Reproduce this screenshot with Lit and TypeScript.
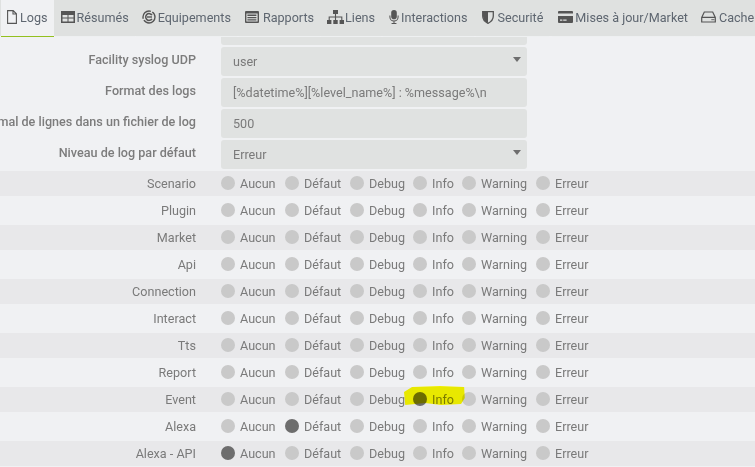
import { LitElement, html, css, svg } from "lit";
import { customElement } from "lit/decorators.js";

const icons: Record<string, any> = {
  file: svg`<svg class="ic" style="width:10px" viewBox="0 0 10 14"><path d="M.6.6h5.6l3.2 3.2v9.6H.6zM6 .8v3.2h3.2" fill="none" stroke="currentColor" stroke-width="1.1"/></svg>`,
  table: svg`<svg class="ic" style="width:14px" viewBox="0 0 14 12"><path fill-rule="evenodd" d="M0 0h14v12H0zM1.5 4v2.6h5V4zM7.5 4v2.6h5V4zM1.5 7.6v2.9h5V7.6zM7.5 7.6v2.9h5V7.6z" fill="currentColor"/></svg>`,
  equip: svg`<svg class="ic" style="width:14px" viewBox="0 0 14 14"><circle cx="7" cy="7" r="6" fill="none" stroke="currentColor" stroke-width="1.4" stroke-dasharray="15 1.5 13 1.5"/><path d="M10 5.2A3.4 3.4 0 1 0 10 8.8" fill="none" stroke="currentColor" stroke-width="1.5"/><path d="M5 7h5" stroke="currentColor" stroke-width="1.4"/></svg>`,
  report: svg`<svg class="ic" style="width:14px" viewBox="0 0 14 12"><path fill-rule="evenodd" d="M1 0h12a1 1 0 0 1 1 1v10a1 1 0 0 1-1 1H1a1 1 0 0 1-1-1V1a1 1 0 0 1 1-1zM1.4 2.6v8h11.2v-8zM2.4 3.6h9v1.4h-9zM2.4 5.9h9v1.4h-9zM2.4 8.2h9v1.4h-9z" fill="currentColor"/></svg>`,
  sitemap: svg`<svg class="ic" style="width:17px" viewBox="0 0 17 14"><path d="M6 0h5v4H6zM0 10h4.4v4H0zM6.3 10h4.4v4H6.3zM12.6 10H17v4h-4.4z" fill="currentColor"/><path d="M8.5 4v6M2.2 10V7h12.6v3" fill="none" stroke="currentColor" stroke-width="1.1"/></svg>`,
  mic: svg`<svg class="ic" style="width:10px" viewBox="0 0 10 15"><rect x="2" y="0" width="6" height="10" rx="3" fill="currentColor"/><path d="M.6 6v1.5a4.4 4.4 0 0 0 8.8 0V6M5 12v2M2.4 14.4h5.2" fill="none" stroke="currentColor" stroke-width="1.1"/></svg>`,
  shield: svg`<svg class="ic" style="width:12px" viewBox="0 0 12 14"><path d="M.7 1.6h10.6V6c0 3.6-2.6 6-5.3 7.3C3.3 12 .7 9.6.7 6z" fill="none" stroke="currentColor" stroke-width="1.3"/><path d="M1 2h5v11C3.5 12 1 9.6 1 6z" fill="currentColor"/></svg>`,
  card: svg`<svg class="ic" style="width:15px" viewBox="0 0 15 12"><path fill-rule="evenodd" d="M1 0h13a1 1 0 0 1 1 1v1.6H0V1a1 1 0 0 1 1-1zM0 5h15v6a1 1 0 0 1-1 1H1a1 1 0 0 1-1-1zM2 8.6v1.2h2.4V8.6zM5.2 8.6v1.2h3.4V8.6z" fill="currentColor"/></svg>`,
  hdd: svg`<svg class="ic" style="width:15px" viewBox="0 0 15 12"><path d="M.7 6.5 3.3 1h8.4l2.6 5.5V11H.7zM.9 6.4h13.2" fill="none" stroke="currentColor" stroke-width="1.2"/><path d="M10.5 8h1.2v1.2h-1.2zM12.3 8h1v1.2h-1z" fill="currentColor"/></svg>`,
};

const tabs: [string, string, number, number][] = [
  ["file", "Logs", 3, 0],
  ["table", "Résumés", 2, 0],
  ["equip", "Equipements", 2, 0],
  ["report", "Rapports", 4, 1],
  ["sitemap", "Liens", 1, 0],
  ["mic", "Interactions", 2, 1],
  ["shield", "Securité", 4, 1],
  ["card", "Mises à jour/Market", 2, 2],
  ["hdd", "Cache", 3, 0],
];

const levels = ["Aucun", "Défaut", "Debug", "Info", "Warning", "Erreur"];
const rows: [string, number][] = [
  ["Scenario", -1], ["Plugin", -1], ["Market", -1], ["Api", -1], ["Connection", -1],
  ["Interact", -1], ["Tts", -1], ["Report", -1], ["Event", 3], ["Alexa", 1], ["Alexa - API", 0],
];
const fields: [string, string, boolean][] = [
  ["Facility syslog UDP", "user", true],
  ["Format des logs", "[%datetime%][%level_name%] : %message%\\n", false],
  ["Nombre maximal de lignes dans un fichier de log", "500", false],
  ["Niveau de log par défaut", "Erreur", true],
];

@customElement("app-root")
export class AppRoot extends LitElement {
  static styles = css`
    :host {
      display: block;
      position: relative;
      width: 755px;
      height: 467px;
      overflow: hidden;
      background: #f0f1f3;
      font-family: Roboto, sans-serif;
      font-size: 12.6px;
      color: #7a7a7a;
    }
    .nav {
      display: flex;
      height: 36px;
      padding-left: 1px;
      background: #dfe1e0;
      white-space: nowrap;
    }
    .tab {
      display: flex;
      align-items: center;
      flex: none;
      height: 37px;
      box-sizing: border-box;
      padding: 0 6px 2px;
      margin-right: 1px;
      color: #5e6670;
      border-bottom: 1px solid #eef0f1;
    }
    .tab.active {
      background: #f0f1f3;
      border-bottom: 1px solid #93c01f;
    }
    .ic { flex: none; height: 14px; color: #555; }
    .top {
      margin: 1px 0 2px 221px;
      width: 306px;
      height: 8px;
      background: #e0e2e1;
      border-radius: 0 0 3px 3px;
    }
    .field {
      display: flex;
      height: 29px;
      margin-bottom: 2px;
    }
    .flabel {
      flex: none;
      width: 196px;
      margin-right: 25px;
      display: flex;
      justify-content: flex-end;
      align-items: center;
      padding-bottom: 4px;
      box-sizing: border-box;
      font-weight: 500;
      white-space: nowrap;
      color: #7c7c7c;
    }
    .input {
      flex: none;
      position: relative;
      width: 306px;
      box-sizing: border-box;
      padding: 0 12px 1px;
      display: flex;
      align-items: center;
      background: #e0e2e1;
      border-radius: 3px;
      color: #7a7a7a;
    }
    .caret {
      position: absolute;
      right: 6px;
      top: 10px;
      border-style: solid;
      border-color: #6e6e6e transparent transparent;
      border-width: 5px 4.5px 0;
    }
    .row {
      display: grid;
      grid-template-columns: 196px 25px 64px 65px 63px 49px 74px auto;
      align-items: center;
      height: 25px;
      margin-bottom: 2px;
    }
    .row:nth-child(odd) { background: #e8e8ea; }
    .rlabel {
      grid-column: 1;
      text-align: right;
      white-space: nowrap;
    }
    .opt {
      display: flex;
      align-items: center;
      gap: 5px;
      margin-bottom: 1px;
    }
    .opt:nth-child(2) { grid-column: 3; }
    .dot {
      width: 14px;
      height: 14px;
      border-radius: 50%;
      background: #c9c9c9;
    }
    .dot.on { background: #6d6d6d; }
    .mark {
      position: absolute;
      left: 404px;
      top: 386px;
      width: 62px;
      height: 20px;
      background: #ffff00;
      clip-path: polygon(0 30%, 13% 5%, 58% 0, 97% 5%, 98% 60%, 92% 90%, 60% 95%, 34% 85%, 2% 95%);
      mix-blend-mode: multiply;
    }
  `;

  render() {
    return html`
      <div class="nav">
        ${tabs.map(
          ([ic, t, g, m], i) => html`<div class="tab ${i === 0 ? "active" : ""}" style="gap:${g}px;margin-left:${m}px">${icons[ic]}<span>${t}</span></div>`
        )}
      </div>
      <div class="top"></div>
      ${fields.map(
        ([l, v, sel]) => html`<div class="field">
          <div class="flabel">${l}</div>
          <div class="input">${v}${sel ? html`<span class="caret"></span>` : ""}</div>
        </div>`
      )}
      <div class="rows">
        ${rows.map(
          ([l, on]) => html`<div class="row">
            <div class="rlabel">${l}</div>
            ${levels.map(
              (lv, i) => html`<div class="opt"><span class="dot ${i === on ? "on" : ""}"></span><span>${lv}</span></div>`
            )}
          </div>`
        )}
      </div>
      <div class="mark"></div>
    `;
  }
}
